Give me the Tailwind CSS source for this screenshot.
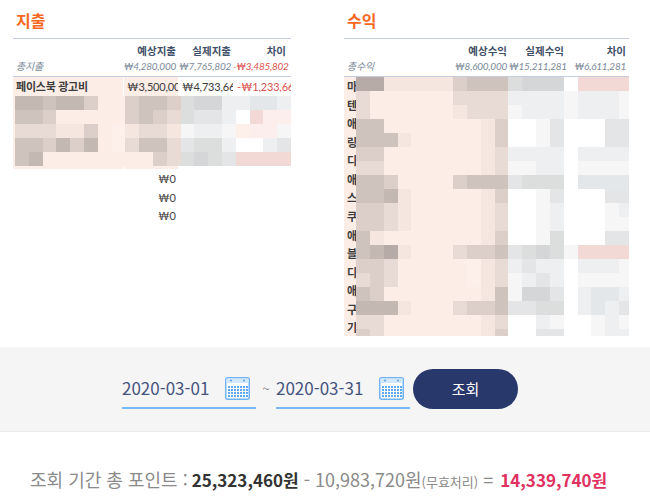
<!DOCTYPE html>
<html lang="ko">
<head>
  <meta charset="UTF-8" />
  <meta name="viewport" content="width=device-width, initial-scale=1" />
  <title>포인트 조회</title>
  <script src="https://cdn.jsdelivr.net/npm/@tailwindcss/browser@4"></script>
</head>
<body class="bg-white font-['Lato','Noto_Sans_CJK_KR',sans-serif] overflow-hidden">

  <div class="flex h-[347px] pl-[13px] gap-[53px]">

    <!-- 지출 -->
    <section class="w-[278px]">
      <h2 class="h-[38px] pl-[3px] pt-[8px] text-[16px] leading-[25px] font-bold text-[#f7681f] font-['Noto_Sans_CJK_KR',sans-serif]">지출</h2>
      <div class="border-t border-[#c5cce2]">
        <div class="grid grid-cols-[110px_55px_55px_58px] h-[20px] items-end text-right text-[10.5px] leading-[16px] font-bold text-[#3f5068]">
          <span></span><span class="pr-[2px]">예상지출</span><span class="pr-[2px]">실제지출</span><span class="pr-[5px]">차이</span>
        </div>
        <div class="grid grid-cols-[110px_55px_55px_58px] h-[17px] pt-[1px] text-right whitespace-nowrap text-[10px] leading-[13px] tracking-[-0.25px] italic text-[#7d8a99]">
          <span class="text-left pl-[3px]">총지출</span><span class="pr-[2px]">₩4,280,000</span><span class="pr-[2px]">₩7,765,802</span><span class="pr-[5px] text-[#d9534f]">-₩3,485,802</span>
        </div>
      </div>
      <div class="border-t border-[#c5cce2] relative">
        <div class="grid grid-cols-[110px_55px_55px_58px] h-[19px] items-center text-[11px] tracking-[-0.2px] text-[#3c3c3c]">
          <span class="bg-[#fcede6] h-full pl-[3px] font-bold leading-[19px]">페이스북 광고비</span>
          <span class="bg-[#fcede6] h-full ml-px pl-[3px] leading-[19px] overflow-hidden whitespace-nowrap">₩3,500,000</span>
          <span class="h-full pl-[4px] leading-[19px] overflow-hidden whitespace-nowrap">₩4,733,660</span>
          <span class="h-full pl-[4px] pr-[3px] leading-[19px] overflow-hidden whitespace-nowrap text-[#d9534f]">-₩1,233,660</span>
        </div>
        <div class="grid grid-cols-[110px_55px] h-[73px]">
          <span class="bg-[#fcede6]"></span><span class="bg-[#fcede6] ml-px"></span>
        </div>
        <div id="expenseBlur" class="absolute left-[2px] top-[19px] w-[276px]"></div>
        <div class="w-[165px] pr-[2px] text-right text-[11px] text-[#444]">
          <p class="h-[18.5px] leading-[19px]">₩0</p>
          <p class="h-[18.5px] leading-[19px]">₩0</p>
          <p class="h-[18.5px] leading-[19px]">₩0</p>
        </div>
      </div>
    </section>

    <!-- 수익 -->
    <section class="w-[285px]">
      <h2 class="h-[38px] pl-[3px] pt-[8px] text-[16px] leading-[25px] font-bold text-[#f7681f] font-['Noto_Sans_CJK_KR',sans-serif]">수익</h2>
      <div class="border-t border-[#c5cce2]">
        <div class="grid grid-cols-[165px_58px_62px] h-[20px] items-end text-right text-[10.5px] leading-[16px] font-bold text-[#3f5068]">
          <span class="pr-[2px]">예상수익</span><span class="pr-[3px]">실제수익</span><span class="pr-[3px]">차이</span>
        </div>
        <div class="grid grid-cols-[110px_55px_58px_62px] h-[17px] pt-[1px] text-right whitespace-nowrap text-[10px] leading-[13px] tracking-[-0.25px] italic text-[#7d8a99]">
          <span class="text-left pl-[3px]">총수익</span><span class="pr-[2px]">₩8,600,000</span><span class="pr-[3px]">₩15,211,281</span><span class="pr-[3px]">₩6,611,281</span>
        </div>
      </div>
      <div class="relative h-[260px] overflow-hidden border-t border-[#c5cce2]">
        <div class="w-[165px] bg-[#fcede6] h-full pl-[3px] text-[11px] font-bold text-[#3c3c3c]">
          <p class="h-[18.57px] leading-[19px]">마</p>
          <p class="h-[18.57px] leading-[19px]">텐</p>
          <p class="h-[18.57px] leading-[19px]">애</p>
          <p class="h-[18.57px] leading-[19px]">링</p>
          <p class="h-[18.57px] leading-[19px]">디</p>
          <p class="h-[18.57px] leading-[19px]">애</p>
          <p class="h-[18.57px] leading-[19px]">스</p>
          <p class="h-[18.57px] leading-[19px]">쿠</p>
          <p class="h-[18.57px] leading-[19px]">애</p>
          <p class="h-[18.57px] leading-[19px]">블</p>
          <p class="h-[18.57px] leading-[19px]">디</p>
          <p class="h-[18.57px] leading-[19px]">애</p>
          <p class="h-[18.57px] leading-[19px]">구</p>
          <p class="h-[18.57px] leading-[19px]">기</p>
        </div>
        <div id="incomeBlur" class="absolute left-[12px] top-0 w-[277px]"></div>
      </div>
    </section>
  </div>

  <!-- 조회 기간 -->
  <div class="h-[85px] bg-[#f5f5f5] border-b border-[#ececec] pl-[122px] font-['Noto_Sans_CJK_KR',sans-serif]">
    <div class="flex items-start pt-[22px] w-[396px]">
      <div class="w-[134px] h-[40px] border-b-2 border-[#7ab8f5] flex items-center justify-between pr-[6px]">
        <span class="text-[17px] text-[#45547e]">2020-03-01</span>
        <svg width="25" height="23" viewBox="0 0 25 23" fill="none">
          <defs><pattern id="calDots" width="3" height="3" patternUnits="userSpaceOnUse"><rect width="2" height="2" fill="#5fa9f3" /></pattern></defs>
          <rect x="0.75" y="0.75" width="23.5" height="21.5" rx="2" stroke="#6fb2f5" stroke-width="1.5" fill="#fff" />
          <rect x="1.5" y="1.5" width="22" height="4.5" fill="#d3e7fb" />
          <circle cx="6" cy="3.5" r="1" fill="#5a9fe6" /><circle cx="19" cy="3.5" r="1" fill="#5a9fe6" />
          <rect x="3" y="8" width="20" height="12" fill="url(#calDots)" />
        </svg>
      </div>
      <span class="w-[20px] pt-[10px] text-center text-[13px] text-[#888]">~</span>
      <div class="w-[134px] h-[40px] border-b-2 border-[#7ab8f5] flex items-center justify-between pr-[6px]">
        <span class="text-[17px] text-[#45547e]">2020-03-31</span>
        <svg width="25" height="23" viewBox="0 0 25 23" fill="none">
          <rect x="0.75" y="0.75" width="23.5" height="21.5" rx="2" stroke="#6fb2f5" stroke-width="1.5" fill="#fff" />
          <rect x="1.5" y="1.5" width="22" height="4.5" fill="#d3e7fb" />
          <circle cx="6" cy="3.5" r="1" fill="#5a9fe6" /><circle cx="19" cy="3.5" r="1" fill="#5a9fe6" />
          <rect x="3" y="8" width="20" height="12" fill="url(#calDots)" />
        </svg>
      </div>
      <button class="ml-[3px] w-[105px] h-[40px] rounded-full bg-[#28386b] text-white text-[15px]">조회</button>
    </div>
  </div>

  <!-- 합계 -->
  <p class="pt-[34px] pl-[30px] whitespace-nowrap text-[18px] leading-[26px] text-[#8a8a8a] font-['Noto_Sans_CJK_KR',sans-serif]">
    조회 기간 총 포인트 : <b class="-ml-px text-[17px] font-bold text-[#333]">25,323,460원</b> - 10,983,720원<span class="text-[13px]">(무효처리)</span> = <b class="ml-[2px] text-[17px] font-bold text-[#e0315f]">14,339,740원</b>
  </p>

  <script>
    const palette = {
      a: "#b7aba7", b: "#c4b8b3", c: "#cfc3be", d: "#dccfc9", e: "#e8dbd6", f: "#f5e6e0",
      p: "#fcede6", q: "#fdf0ea", g: "#dcdddd", h: "#d4d6d7", i: "#e4e5e6", j: "#eeeff0",
      k: "#f6f6f7", w: "#ffffff", r: "#f3d9d6", t: "#fbeeec", s: "#e3e7ea"
    };

    const expenseRows = [
      "bbcbbdppdccdghhjjssj",
      "ccdpppppdcdegiijwrtt",
      "eeeffdpqfeefkjjkqttk",
      "ccdbdbpqecceiggjwwji",
      "cbppppppppdeghgirrrr"
    ];

    const incomeRows = [
      "aafffffdcccghhhwrrrr",
      "eppppppeeeejjjjkjjjk",
      "eppppppfeeekjjjkjjjk",
      "ccpppppppfdwwkiwwwii",
      "cccfpppppfdwwkiwwwii",
      "ddpppppppfejjjjwjjjj",
      "eepppppppfekkjjwkkkk",
      "ccdppppdcccigggwssss",
      "ccbfpppppfdwwkiwwwii",
      "ddefpppppfewwkjwwwkj",
      "ddefpppppfewwkjwwwkk",
      "cfpppppppfdwwkgwwwii",
      "cbafpppeddcighgkrrrr",
      "ddepppppqfejijjwjjjk",
      "edepppppqfekjijwkkkk",
      "cdpppppppfckhhiwjssj",
      "bbbfpppeddciiggwjsji",
      "eepppppppfewwjkwwkjk",
      "depppppppfdwwiiwwkjj"
    ];

    function drawBlur(id, rows) {
      const el = document.getElementById(id);
      rows.forEach(row => {
        const rowEl = document.createElement("div");
        rowEl.className = "grid grid-cols-20 h-[14px]";
        row.split("").forEach(key => {
          const cell = document.createElement("div");
          cell.style.backgroundColor = palette[key];
          rowEl.appendChild(cell);
        });
        el.appendChild(rowEl);
      });
    }

    drawBlur("expenseBlur", expenseRows);
    drawBlur("incomeBlur", incomeRows);
  </script>
</body>
</html>
